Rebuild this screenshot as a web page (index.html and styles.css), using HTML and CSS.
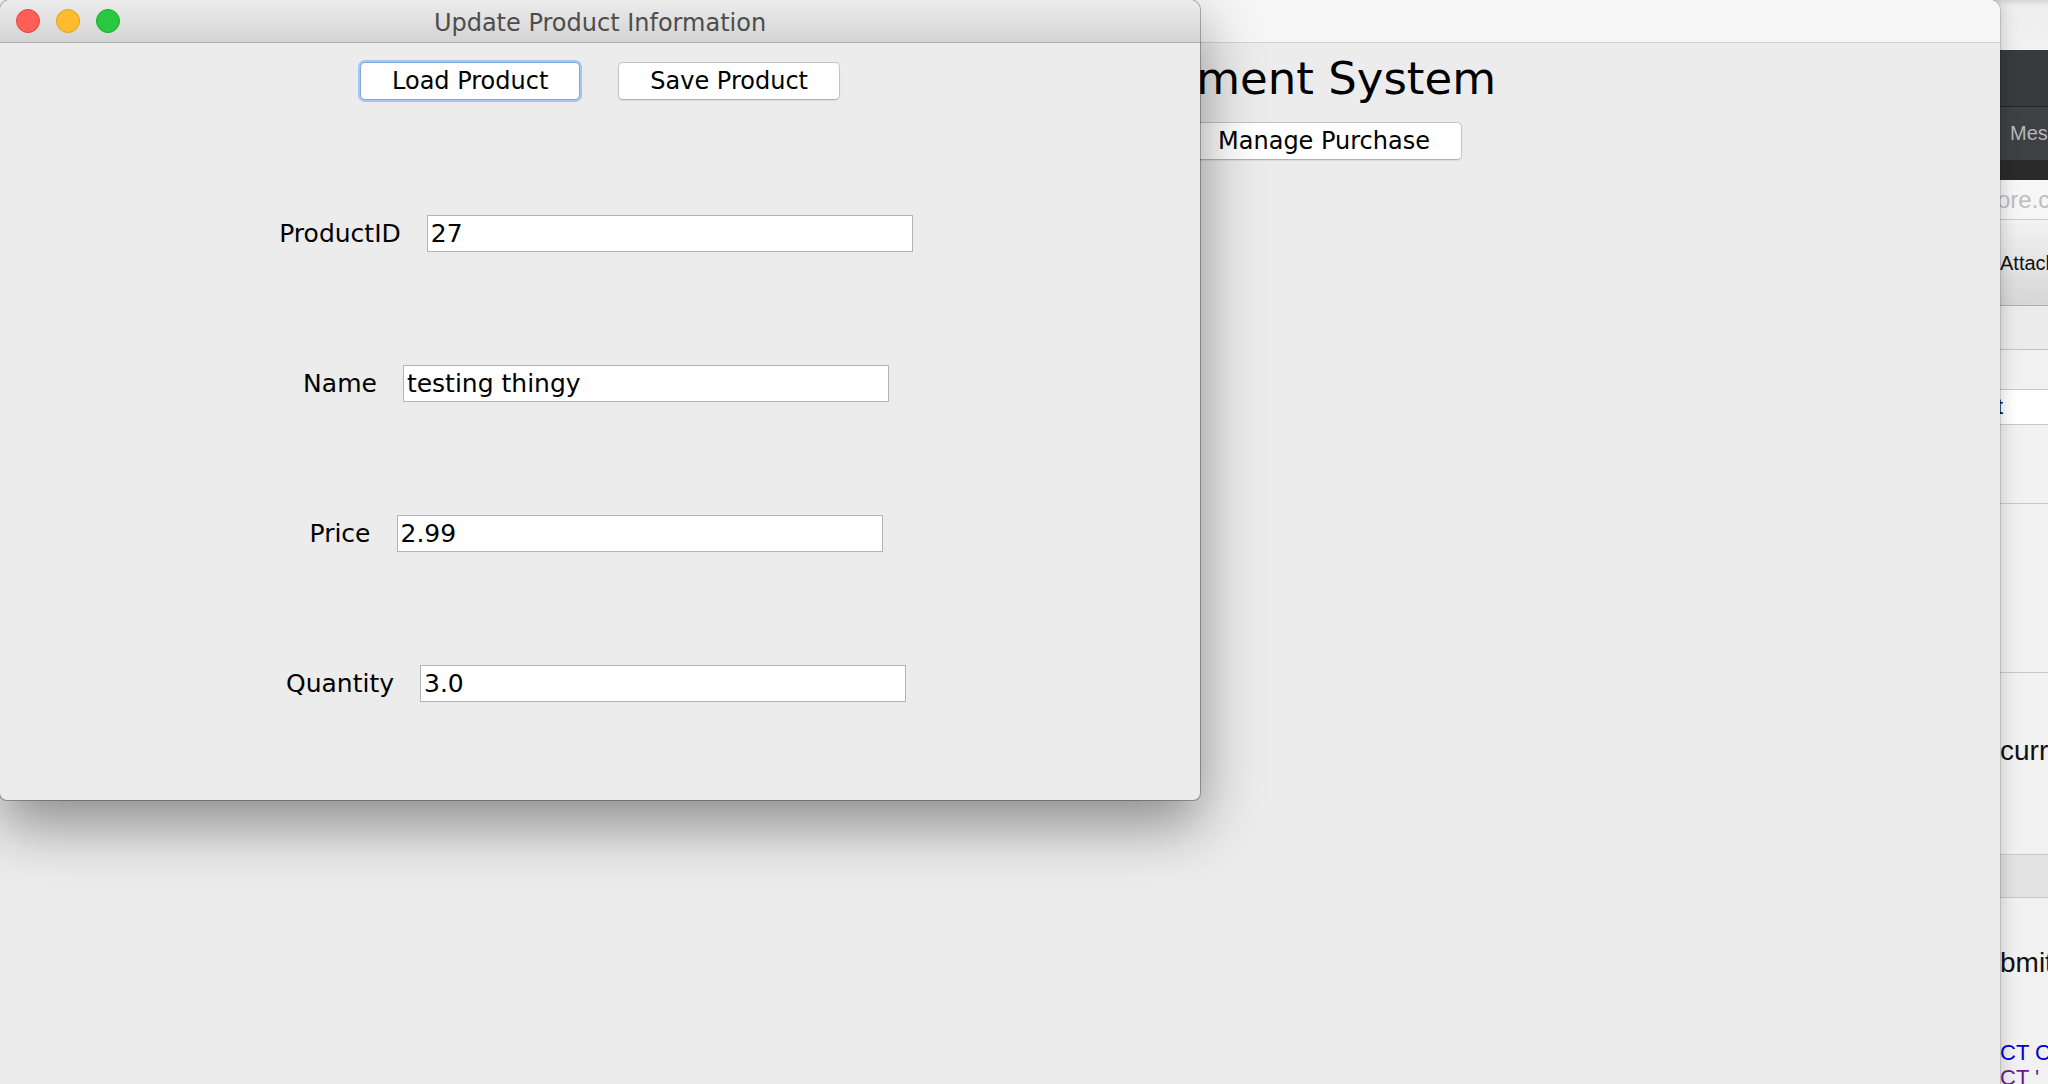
FILE: index.html
```html
<!DOCTYPE html>
<html>
<head>
<meta charset="utf-8">
<link rel="stylesheet" href="styles.css">
</head>
<body>
<div class="desktop">
  <div class="browser">
    <div class="b-top"></div>
    <div class="b-tabs"></div>
    <div class="b-tab"><span class="b-tab-text">Messages</span></div>
    <div class="b-strip"></div>
    <div class="b-url"><span>ore.com</span></div>
    <div class="b-tool"><span>Attach</span></div>
    <div class="b-band"></div>
    <div class="b-field-row"><div class="b-field">t</div></div>
    <div class="b-panel"></div>
    <div class="b-panel b-panel-text"><span>current</span></div>
    <div class="b-bar"></div>
    <div class="b-submit"><span>bmit</span></div>
    <div class="b-code"><span class="c1">CT C</span><span class="c2">CT '</span></div>
  </div>

  <div class="main-window">
    <div class="main-titlebar"></div>
    <div class="main-body">
      <h1 class="main-heading">Management System</h1>
      <div class="main-buttons">
        <button class="mac-btn">Manage Purchase</button>
      </div>
    </div>
  </div>

  <div class="dialog">
    <div class="titlebar">
      <div class="lights">
        <span class="light red"></span>
        <span class="light yellow"></span>
        <span class="light green"></span>
      </div>
      <div class="title">Update Product Information</div>
      <div></div>
    </div>
    <div class="dialog-body">
      <div class="btn-row">
        <button class="mac-btn focused">Load Product</button>
        <button class="mac-btn">Save Product</button>
      </div>
      <div class="form">
        <div class="row"><label class="lbl">ProductID</label><input class="field" type="text" value="27"></div>
        <div class="row"><label class="lbl">Name</label><input class="field" type="text" value="testing thingy"></div>
        <div class="row"><label class="lbl">Price</label><input class="field" type="text" value="2.99"></div>
        <div class="row"><label class="lbl">Quantity</label><input class="field" type="text" value="3.0"></div>
      </div>
    </div>
  </div>
</div>
</body>
</html>
```

FILE: styles.css
```css
* { box-sizing: border-box; }
html, body { margin: 0; padding: 0; }
body { width: 2048px; height: 1084px; overflow: hidden; background: #d8d8d8; }

.desktop {
  position: relative;
  width: 2048px;
  height: 1084px;
  overflow: hidden;
  background: #d8d8d8;
}

/* ---------- browser sliver on the right ---------- */
.browser {
  position: absolute;
  left: 1980px;
  top: 0;
  width: 90px;
  height: 1084px;
  background: #efefef;
  display: flex;
  flex-direction: column;
  font-family: "Liberation Sans", Arial, sans-serif;
  overflow: hidden;
}
.browser > div { flex-shrink: 0; }
.browser span { white-space: nowrap; }
.b-top { height: 50px; background: linear-gradient(#d6d6d6 0, #eeeeee 6px, #f1f1f1 100%); }
.b-tabs { height: 57px; background: #383b3e; border-bottom: 1px solid #262626; }
.b-tab {
  height: 53px;
  background: #3e4144;
  display: flex;
  align-items: center;
  padding-left: 30px;
  font-size: 20px;
  color: #b8b8b8;
}
.b-strip { height: 20px; background: #2a2a2a; }
.b-url {
  height: 40px;
  background: #f6f6f6;
  border-bottom: 1px solid #c9c9c9;
  display: flex;
  align-items: center;
  padding-left: 17px;
  font-size: 24px;
  color: #bdbdbd;
}
.b-tool {
  height: 86px;
  background: linear-gradient(#f2f2f2, #d6d6d6);
  border-bottom: 1px solid #aeaeae;
  display: flex;
  align-items: center;
  padding-left: 20px;
  padding-top: 2px;
  font-size: 20px;
  color: #111;
}
.b-band { height: 44px; background: #ebebeb; border-bottom: 1px solid #c4c4c4; }
.b-field-row { height: 154px; background: #f1f1f1; border-bottom: 1px solid #c9c9c9; padding-top: 39px; }
.b-field {
  height: 36px;
  margin-left: 12px;
  background: #fff;
  border: 1px solid #c8c8c8;
  font-size: 22px;
  line-height: 34px;
  padding-left: 4px;
  color: #111;
}
.b-panel { height: 169px; background: #f1f1f1; border-bottom: 1px solid #c9c9c9; }
.b-panel-text {
  height: 182px;
  display: flex;
  align-items: center;
  padding-left: 20px;
  padding-bottom: 26px;
  font-size: 28px;
  color: #111;
}
.b-bar { height: 43px; background: #e3e3e3; border-bottom: 1px solid #c4c4c4; }
.b-submit {
  height: 130px;
  background: #f1f1f1;
  display: flex;
  align-items: center;
  padding-left: 20px;
  font-size: 28px;
  color: #111;
}
.browser > .b-code {
  flex: 1 1 auto;
  min-height: 0;
  background: #f1f1f1;
  display: flex;
  flex-direction: column;
  padding-left: 20px;
  padding-top: 12px;
  font-size: 22px;
  line-height: 25px;
}
.c1 { color: #0000d0; }
.c2 { color: #6a1b8a; }

/* ---------- main (background) window ---------- */
.main-window {
  position: absolute;
  left: -10px;
  top: 0;
  width: 2010px;
  height: 1120px;
  background: #ececec;
  border-top-right-radius: 10px;
  box-shadow: 0 0 0 1px rgba(0,0,0,0.12), 0 0 18px rgba(0,0,0,0.22);
  display: flex;
  flex-direction: column;
  overflow: hidden;
  font-family: "DejaVu Sans", sans-serif;
}
.main-titlebar {
  height: 43px;
  flex: none;
  background: #f6f6f6;
  border-bottom: 1px solid #d2d2d2;
}
.main-body {
  display: flex;
  flex-direction: column;
  align-items: flex-end;
}
.main-heading {
  margin: 11px 0 0 0;
  padding-right: 504px;
  font-size: 45px;
  font-weight: normal;
  line-height: 49px;
  color: #000;
  white-space: nowrap;
}
.main-buttons {
  margin-top: 19px;
  padding-right: 538px;
  display: flex;
  gap: 36px;
}

/* ---------- shared mac button ---------- */
.mac-btn {
  font-family: "DejaVu Sans", sans-serif;
  font-size: 24px;
  height: 38px;
  padding: 0 31px;
  background: #fff;
  color: #000;
  border: 1px solid #c4c4c4;
  border-bottom-color: #b2b2b2;
  border-radius: 5px;
  box-shadow: 0 1px 1px rgba(0,0,0,0.08);
  line-height: 34px;
  white-space: nowrap;
}
.mac-btn.focused {
  border-color: #7ea9e4;
  box-shadow: 0 0 0 2px #a6c6f0;
}

/* ---------- dialog ---------- */
.dialog {
  position: absolute;
  left: 0;
  top: 0;
  width: 1200px;
  height: 800px;
  background: #ececec;
  border-radius: 10px 10px 7px 7px;
  box-shadow: 0 0 0 1px rgba(0,0,0,0.28), 0 24px 60px rgba(0,0,0,0.42);
  display: flex;
  flex-direction: column;
  overflow: hidden;
  font-family: "DejaVu Sans", sans-serif;
}
.titlebar {
  height: 43px;
  flex: none;
  background: linear-gradient(#ececec, #d4d4d4);
  border-bottom: 1px solid #b0b0b0;
  display: grid;
  grid-template-columns: 1fr auto 1fr;
  align-items: center;
}
.lights {
  display: flex;
  gap: 16px;
  padding-left: 16px;
}
.light {
  width: 24px;
  height: 24px;
  border-radius: 50%;
  display: block;
}
.red { background: #fe5f57; border: 1px solid #e0443e; }
.yellow { background: #febc2e; border: 1px solid #dea123; }
.green { background: #29c840; border: 1px solid #1dad2b; }
.title {
  font-size: 24px;
  color: #4d4d4d;
  white-space: nowrap;
  padding-top: 3px;
}

.dialog-body {
  display: flex;
  flex-direction: column;
  align-items: center;
  padding-top: 19px;
}
.btn-row {
  display: flex;
  gap: 38px;
}
.form {
  margin-top: 115px;
  display: flex;
  flex-direction: column;
  gap: 113px;
  padding-right: 8px;
  align-self: stretch;
}
.row {
  display: flex;
  align-items: center;
  justify-content: center;
  gap: 26px;
}
.lbl {
  font-size: 25px;
  color: #000;
  white-space: nowrap;
}
.field {
  width: 486px;
  height: 37px;
  background: #fff;
  border: 1px solid #b4b4b4;
  border-radius: 0;
  font-family: "DejaVu Sans", sans-serif;
  font-size: 25px;
  padding: 0 3px;
  color: #000;
  outline: none;
}
```
